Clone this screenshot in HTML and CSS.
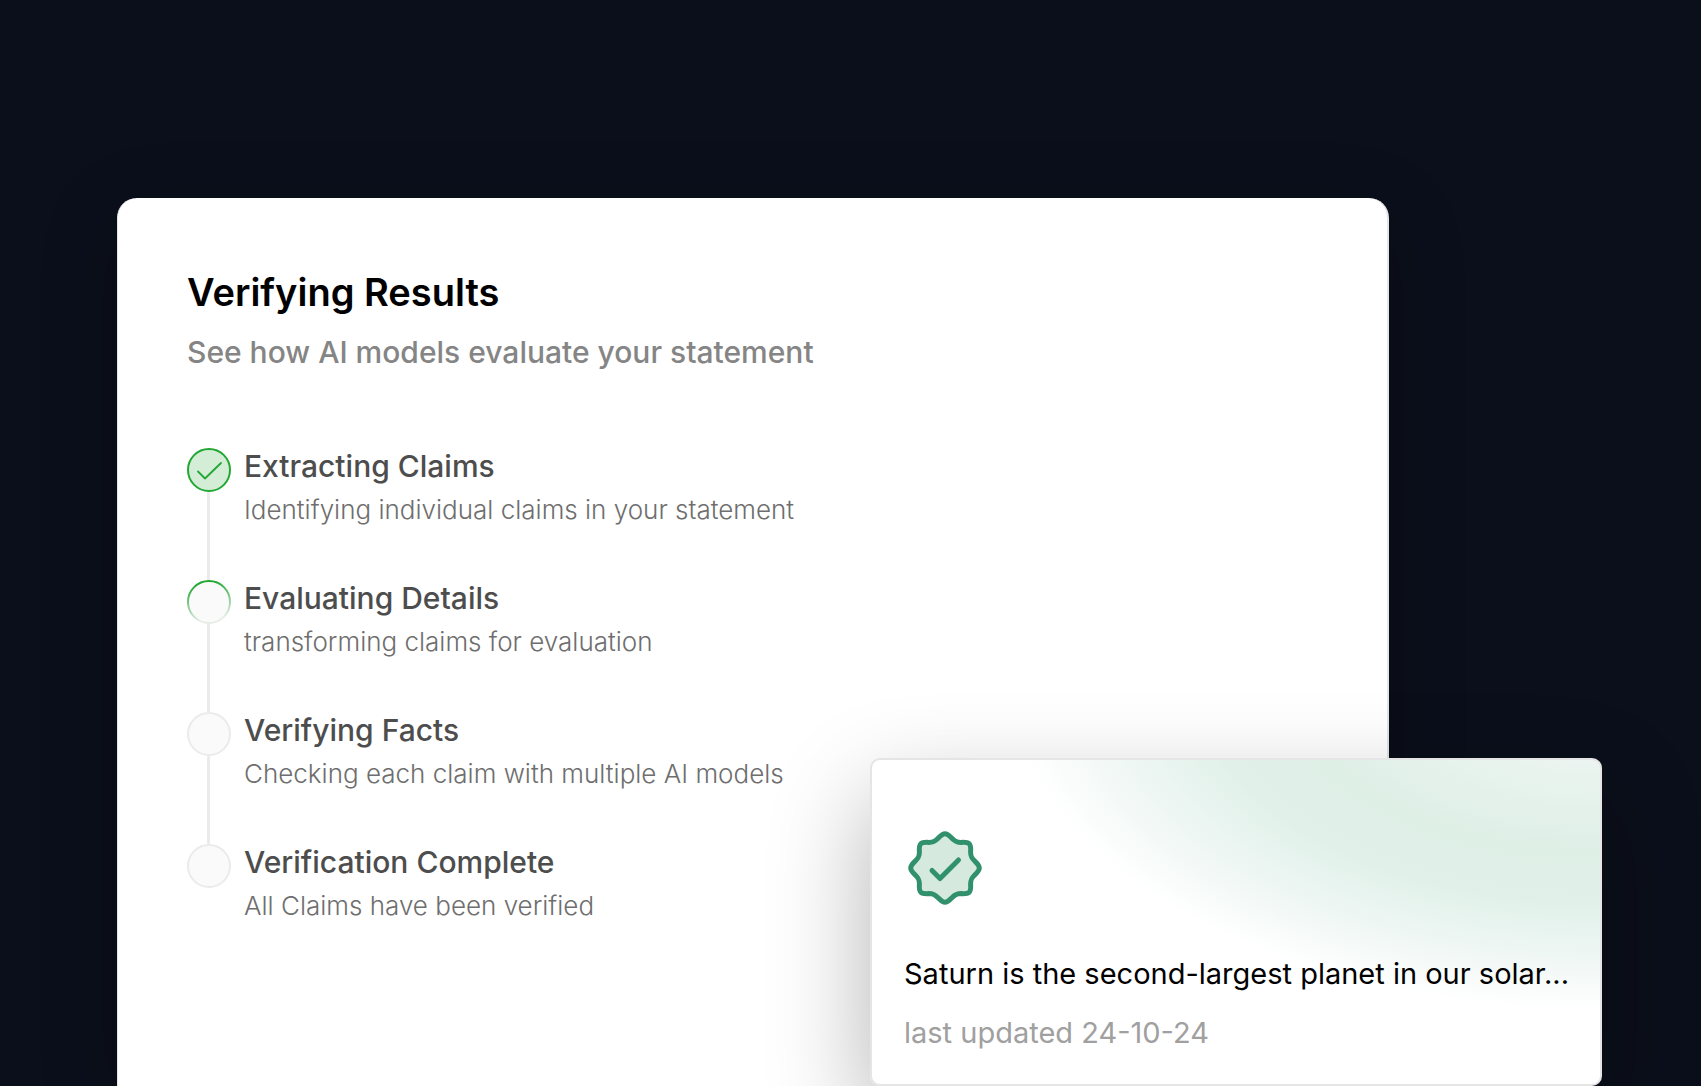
FILE: index.html
```
<!DOCTYPE html>
<html lang="en">
<head>
  <meta charset="UTF-8" />
  <meta name="viewport" content="width=device-width, initial-scale=1.0"/>
  <title>Verifying Results</title>
  <link rel="stylesheet" href="styles.css">
</head>
<body>

<main class="stage">
  <section class="panel">
    <h1>Verifying Results</h1>
    <p class="subtitle">See how AI models evaluate your statement</p>

    <ol class="steps">
      <li class="step">
        <svg class="marker" viewBox="0 0 44 44" aria-hidden="true">
          <circle cx="22" cy="22" r="21" fill="#d3edd7" stroke="#22a733" stroke-width="2"/>
          <path d="M11 23.5 L18 30.5 L34 15" fill="none" stroke="#22a733" stroke-width="1.8" stroke-linecap="round" stroke-linejoin="round"/>
        </svg>
        <div class="step-text">
          <h2>Extracting Claims</h2>
          <p>Identifying individual claims in your statement</p>
        </div>
      </li>
      <li class="step">
        <svg class="marker" viewBox="0 0 44 44" aria-hidden="true">
          <defs>
            <linearGradient id="ring" x1="0.4" y1="0" x2="0.6" y2="1">
              <stop offset="0.05" stop-color="#22a733"/>
              <stop offset="0.9" stop-color="#e6ece6"/>
            </linearGradient>
          </defs>
          <circle cx="22" cy="22" r="21" fill="#fafafa" stroke="url(#ring)" stroke-width="2"/>
        </svg>
        <div class="step-text">
          <h2>Evaluating Details</h2>
          <p>transforming claims for evaluation</p>
        </div>
      </li>
      <li class="step">
        <svg class="marker" viewBox="0 0 44 44" aria-hidden="true">
          <circle cx="22" cy="22" r="21" fill="#fafafa" stroke="#ebebeb" stroke-width="2"/>
        </svg>
        <div class="step-text">
          <h2>Verifying Facts</h2>
          <p>Checking each claim with multiple AI models</p>
        </div>
      </li>
      <li class="step">
        <svg class="marker" viewBox="0 0 44 44" aria-hidden="true">
          <circle cx="22" cy="22" r="21" fill="#fafafa" stroke="#ebebeb" stroke-width="2"/>
        </svg>
        <div class="step-text">
          <h2>Verification Complete</h2>
          <p>All Claims have been verified</p>
        </div>
      </li>
    </ol>
  </section>

  <article class="claim">
    <svg class="badge" viewBox="0 0 80 80" aria-hidden="true">
      <path d="M41 5.7 C43.7 5.7 45.6 7.8 48.2 10.5 C51.3 13.7 52.8 14.4 57 14.4 C65.5 13.8 67.2 15.5 66.6 24 C66.6 28.2 67.3 29.7 70.5 32.8 C73.2 35.4 75.3 37.3 75.3 40 C75.3 42.7 73.2 44.6 70.5 47.2 C67.3 50.3 66.6 51.8 66.6 56 C67.2 64.5 65.5 66.2 57 65.6 C52.8 65.6 51.3 66.3 48.2 69.5 C45.6 72.2 43.7 74.3 41 74.3 C38.3 74.3 36.4 72.2 33.8 69.5 C30.7 66.3 29.2 65.6 25 65.6 C16.5 66.2 14.8 64.5 15.4 56 C15.4 51.8 14.7 50.3 11.5 47.2 C8.8 44.6 6.7 42.7 6.7 40 C6.7 37.3 8.8 35.4 11.5 32.8 C14.7 29.7 15.4 28.2 15.4 24 C14.8 15.5 16.5 13.8 25 14.4 C29.2 14.4 30.7 13.7 33.8 10.5 C36.4 7.8 38.3 5.7 41 5.7 Z" fill="#d5e9df" stroke="#31916c" stroke-width="5" stroke-linejoin="round"/>
      <path d="M28 42.5 L36 50.5 L54.5 32" fill="none" stroke="#31916c" stroke-width="5" stroke-linecap="round" stroke-linejoin="round"/>
    </svg>
    <p class="claim-text">Saturn is the second-largest planet in our solar...</p>
    <p class="claim-date">last updated 24-10-24</p>
  </article>
</main>

</body>
</html>
```
FILE: styles.css
```
* {
  box-sizing: border-box;
}
body {
  margin: 0;
  font-family: Inter, "Liberation Sans", sans-serif;
  background-color: #0b0f1b;
  color: #000;
}
h1, h2, p, ol {
  margin: 0;
  padding: 0;
}
.stage {
  position: relative;
  display: flex;
  min-height: 100vh;
  padding: 198px 312px 0 117px;
  overflow: hidden;
}
.panel {
  flex: 1;
  padding: 70px 69px 0;
  background: #fff;
  border: solid #e5e5e5;
  border-width: 0 2px 0 1px;
  border-radius: 20px 20px 0 0;
  box-shadow: 0 20px 80px rgba(0,0,0,0.2);
}
h1 {
  font-size: 38px;
  line-height: 48px;
  font-weight: 600;
}
.subtitle {
  margin-top: 18px;
  font-size: 30px;
  line-height: 36px;
  font-weight: 500;
  color: #858585;
}
.steps {
  margin-top: 78px;
  list-style: none;
}
.step {
  position: relative;
  display: flex;
  gap: 13px;
  min-height: 132px;
}
/* line down to the next marker */
.step:not(:last-child)::before {
  content: "";
  position: absolute;
  left: 20px;
  top: 44px;
  bottom: 0;
  width: 3px;
  background: #ebebeb;
}
.marker {
  flex: none;
  width: 44px;
  height: 44px;
}
h2 {
  font-size: 30px;
  line-height: 36px;
  font-weight: 500;
  color: #4d4d4d;
}
.step-text p {
  margin-top: 10px;
  font-size: 26px;
  line-height: 32px;
  font-weight: 300;
  color: #6e6e6e;
}
.claim {
  position: absolute;
  right: 99px;
  bottom: 0;
  width: 732px;
  padding: 68px 28px 33px 32px;
  background: radial-gradient(590px 330px at 728px -80px, #f4f8f6 0%, #ebf4f0 25%, #deefe6 52%, #e1f1ea 68%, #f0f7f5 85%, #fff 100%);
  border: 2px solid #e5e5e5;
  border-radius: 10px;
  box-shadow: 0 40px 100px rgba(0,0,0,0.3);
}
.badge {
  display: block;
  width: 80px;
  height: 80px;
}
.claim-text, .claim-date {
  font-size: 29px;
  line-height: 36px;
  white-space: nowrap;
}
.claim-text {
  margin-top: 48px;
}
.claim-date {
  margin-top: 23px;
  color: #a0a0a0;
}
```
